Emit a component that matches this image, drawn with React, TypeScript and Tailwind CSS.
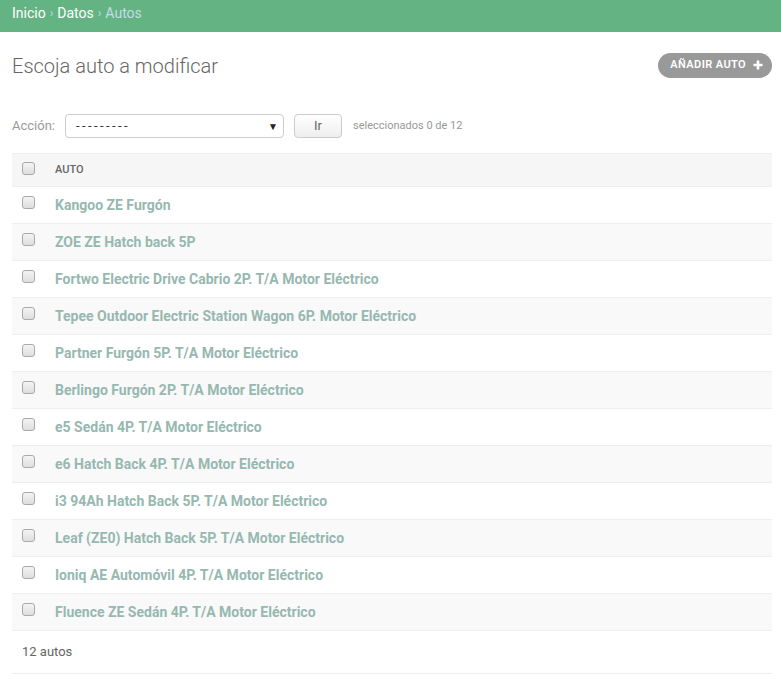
import React from "react";

const autos = [
  "Kangoo ZE Furgón",
  "ZOE ZE Hatch back 5P",
  "Fortwo Electric Drive Cabrio 2P. T/A Motor Eléctrico",
  "Tepee Outdoor Electric Station Wagon 6P. Motor Eléctrico",
  "Partner Furgón 5P. T/A Motor Eléctrico",
  "Berlingo Furgón 2P. T/A Motor Eléctrico",
  "e5 Sedán 4P. T/A Motor Eléctrico",
  "e6 Hatch Back 4P. T/A Motor Eléctrico",
  "i3 94Ah Hatch Back 5P. T/A Motor Eléctrico",
  "Leaf (ZE0) Hatch Back 5P. T/A Motor Eléctrico",
  "Ioniq AE Automóvil 4P. T/A Motor Eléctrico",
  "Fluence ZE Sedán 4P. T/A Motor Eléctrico",
];

function Checkbox() {
  return (
    <span className="block w-[13px] h-[13px] rounded-[3px] border border-[#a9a9a9] bg-gradient-to-b from-[#f4f4f4] to-[#dedede]" />
  );
}

function App() {
  return (
    <div className="min-h-[690px] bg-white font-['Roboto','Liberation_Sans',sans-serif] text-[#333]">
      {/* breadcrumbs */}
      <div className="h-8 bg-[#64b382] px-3 pb-[6px] flex items-center text-[14px] text-[#c4dce8]">
        <span className="text-white">Inicio</span>
        <span className="mx-[4px] text-[12px]">›</span>
        <span className="text-white">Datos</span>
        <span className="mx-[4px] text-[12px]">›</span>
        <span>Autos</span>
      </div>

      <div className="pl-3 pr-[9px]">
        <div className="flex items-center justify-between h-[68px]">
          <h1 className="text-[20px] font-light text-[#666]">Escoja auto a modificar</h1>
          <a className="h-[25px] mt-[-2px] rounded-full bg-[#999] text-white text-[11px] font-semibold tracking-[0.4px] uppercase flex items-center pl-3 pr-[9px] gap-[7px]">
            Añadir auto
            <svg width="10" height="10" viewBox="0 0 10 10">
              <path d="M5 0.5v9M0.5 5h9" stroke="white" strokeWidth="2.6" />
            </svg>
          </a>
        </div>

        {/* actions */}
        <div className="flex items-center mt-[14px] h-6 text-[13px]">
          <span className="text-[#999]">Acción:</span>
          <div className="ml-[10px] w-[219px] h-6 border border-[#ccc] rounded-[4px] flex items-center justify-between pl-[10px] pr-[5px]">
            <span className="text-[#333] text-[13px] tracking-[2.4px]">---------</span>
            <span className="text-[10px] text-[#222]">▼</span>
          </div>
          <button className="ml-[10px] w-[48px] h-6 border border-[#ccc] rounded-[4px] bg-gradient-to-b from-white to-[#eee] text-[#666] text-[13px]">
            Ir
          </button>
          <span className="ml-[11px] text-[11px] text-[#999]">seleccionados 0 de 12</span>
        </div>

        {/* table */}
        <div className="mt-[15px] border-t border-[#eee]">
          <div className="h-[33px] bg-[#f6f6f6] flex items-center border-b border-[#eee]">
            <div className="w-[43px] pl-[10px] mt-[-4px]">
              <Checkbox />
            </div>
            <span className="text-[11px] font-medium text-[#666] uppercase">Auto</span>
          </div>
          {autos.map((a, i) => (
            <div
              key={a}
              className={`h-[37px] flex items-center border-b border-[#eee] ${i % 2 === 1 ? "bg-[#f9f9f9]" : "bg-white"}`}
            >
              <div className="w-[43px] pl-[10px] mt-[-5px]">
                <Checkbox />
              </div>
              <span className="text-[14px] font-bold text-[#96b8b0]">{a}</span>
            </div>
          ))}
        </div>

        <div className="h-[43px] pl-[10px] flex items-center border-b border-[#eee] text-[13px] text-[#666]">
          12 autos
        </div>
      </div>
    </div>
  );
}

export default App;
